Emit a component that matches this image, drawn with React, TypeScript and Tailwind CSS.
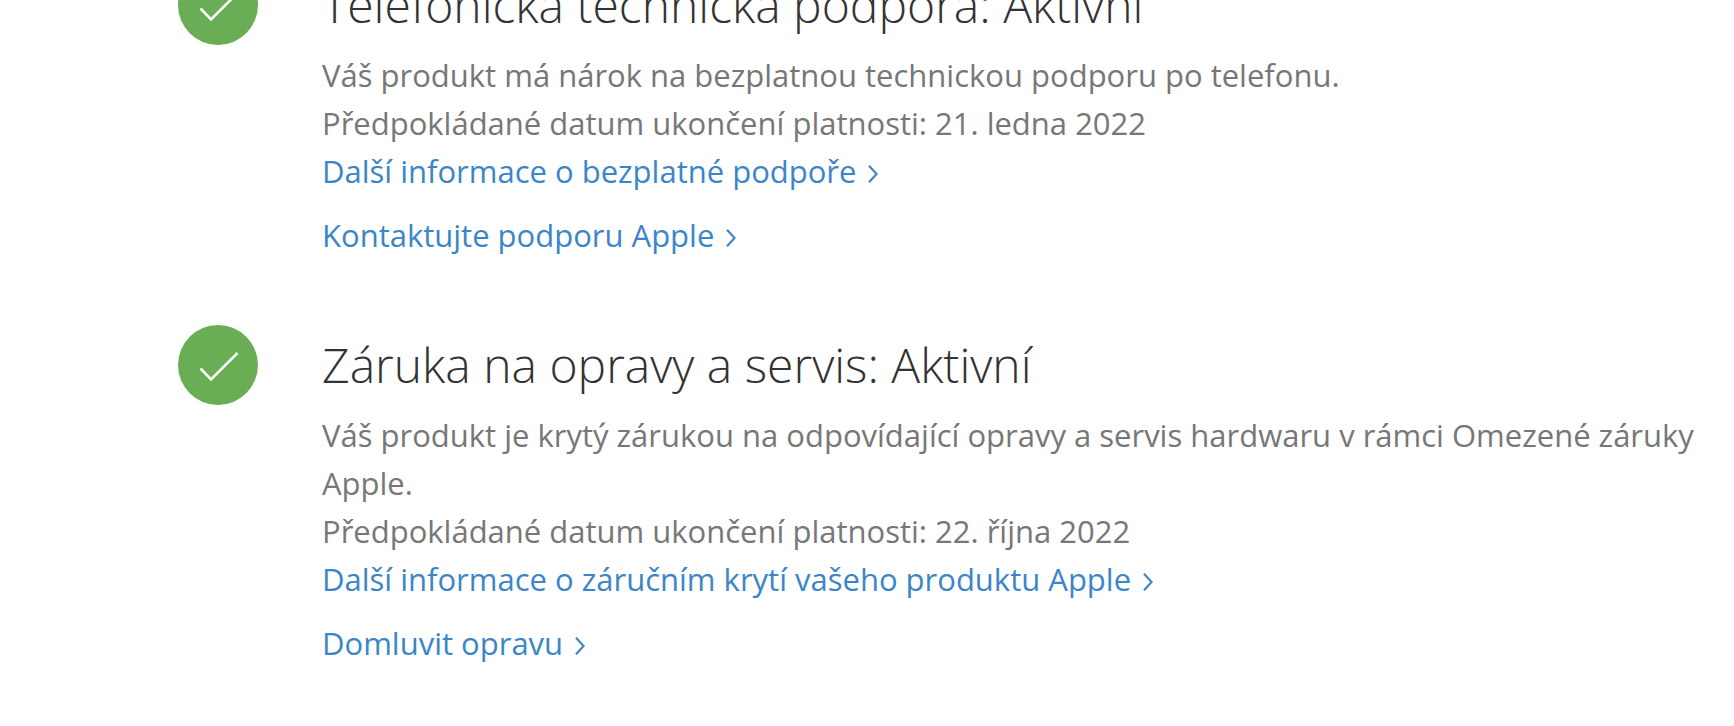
const coverages = [
  {
    id: "phone-support",
    title: "Telefonická technická podpora: Aktivní",
    description: "Váš produkt má nárok na bezplatnou technickou podporu po telefonu.",
    expiration: "Předpokládané datum ukončení platnosti: 21. ledna 2022",
    more: "Další informace o bezplatné podpoře",
    action: "Kontaktujte podporu Apple",
  },
  {
    id: "repairs",
    title: "Záruka na opravy a servis: Aktivní",
    description:
      "Váš produkt je krytý zárukou na odpovídající opravy a servis hardwaru v rámci Omezené záruky Apple.",
    expiration: "Předpokládané datum ukončení platnosti: 22. října 2022",
    more: "Další informace o záručním krytí vašeho produktu Apple",
    action: "Domluvit opravu",
  },
];

function CheckBadge() {
  return (
    <svg viewBox="0 0 80 80" className="size-20 shrink-0" aria-hidden="true">
      <circle cx="40" cy="40" r="40" fill="#69ad55" />
      <path d="M22.5 43.5 33 54.5 59.5 28" fill="none" stroke="#fff" strokeWidth="2.6" />
    </svg>
  );
}

function MoreLink({ id, label }: { id: string; label: string }) {
  return (
    <a href={`#${id}`} className="text-[#3b86c8] hover:underline">
      {label}
      <svg
        viewBox="0 0 10 18"
        className="ml-3 inline-block h-[18px] w-[10px] align-baseline"
        aria-hidden="true"
      >
        <path d="M1 .8 8.6 9 1 17.2" fill="none" stroke="currentColor" strokeWidth="2.2" />
      </svg>
    </a>
  );
}

export default function App() {
  return (
    <main className="overflow-hidden bg-white pr-2 pb-12 pl-[178px] font-['Open_Sans',sans-serif]">
      <div className="-mt-[35px] flex flex-col gap-[66px]">
        {coverages.map((item) => (
          <section key={item.id} className="flex items-start gap-16">
            <CheckBadge />
            <div className="min-w-0 flex-1 text-[31px] leading-[48px] text-[#777]">
              <h2 className="mb-1.5 text-[48px] leading-[80px] font-light text-[#333]">
                {item.title}
              </h2>
              <p>{item.description}</p>
              <p>{item.expiration}</p>
              <p>
                <MoreLink id={`${item.id}-info`} label={item.more} />
              </p>
              <p className="mt-4">
                <MoreLink id={`${item.id}-action`} label={item.action} />
              </p>
            </div>
          </section>
        ))}
      </div>
    </main>
  );
}
